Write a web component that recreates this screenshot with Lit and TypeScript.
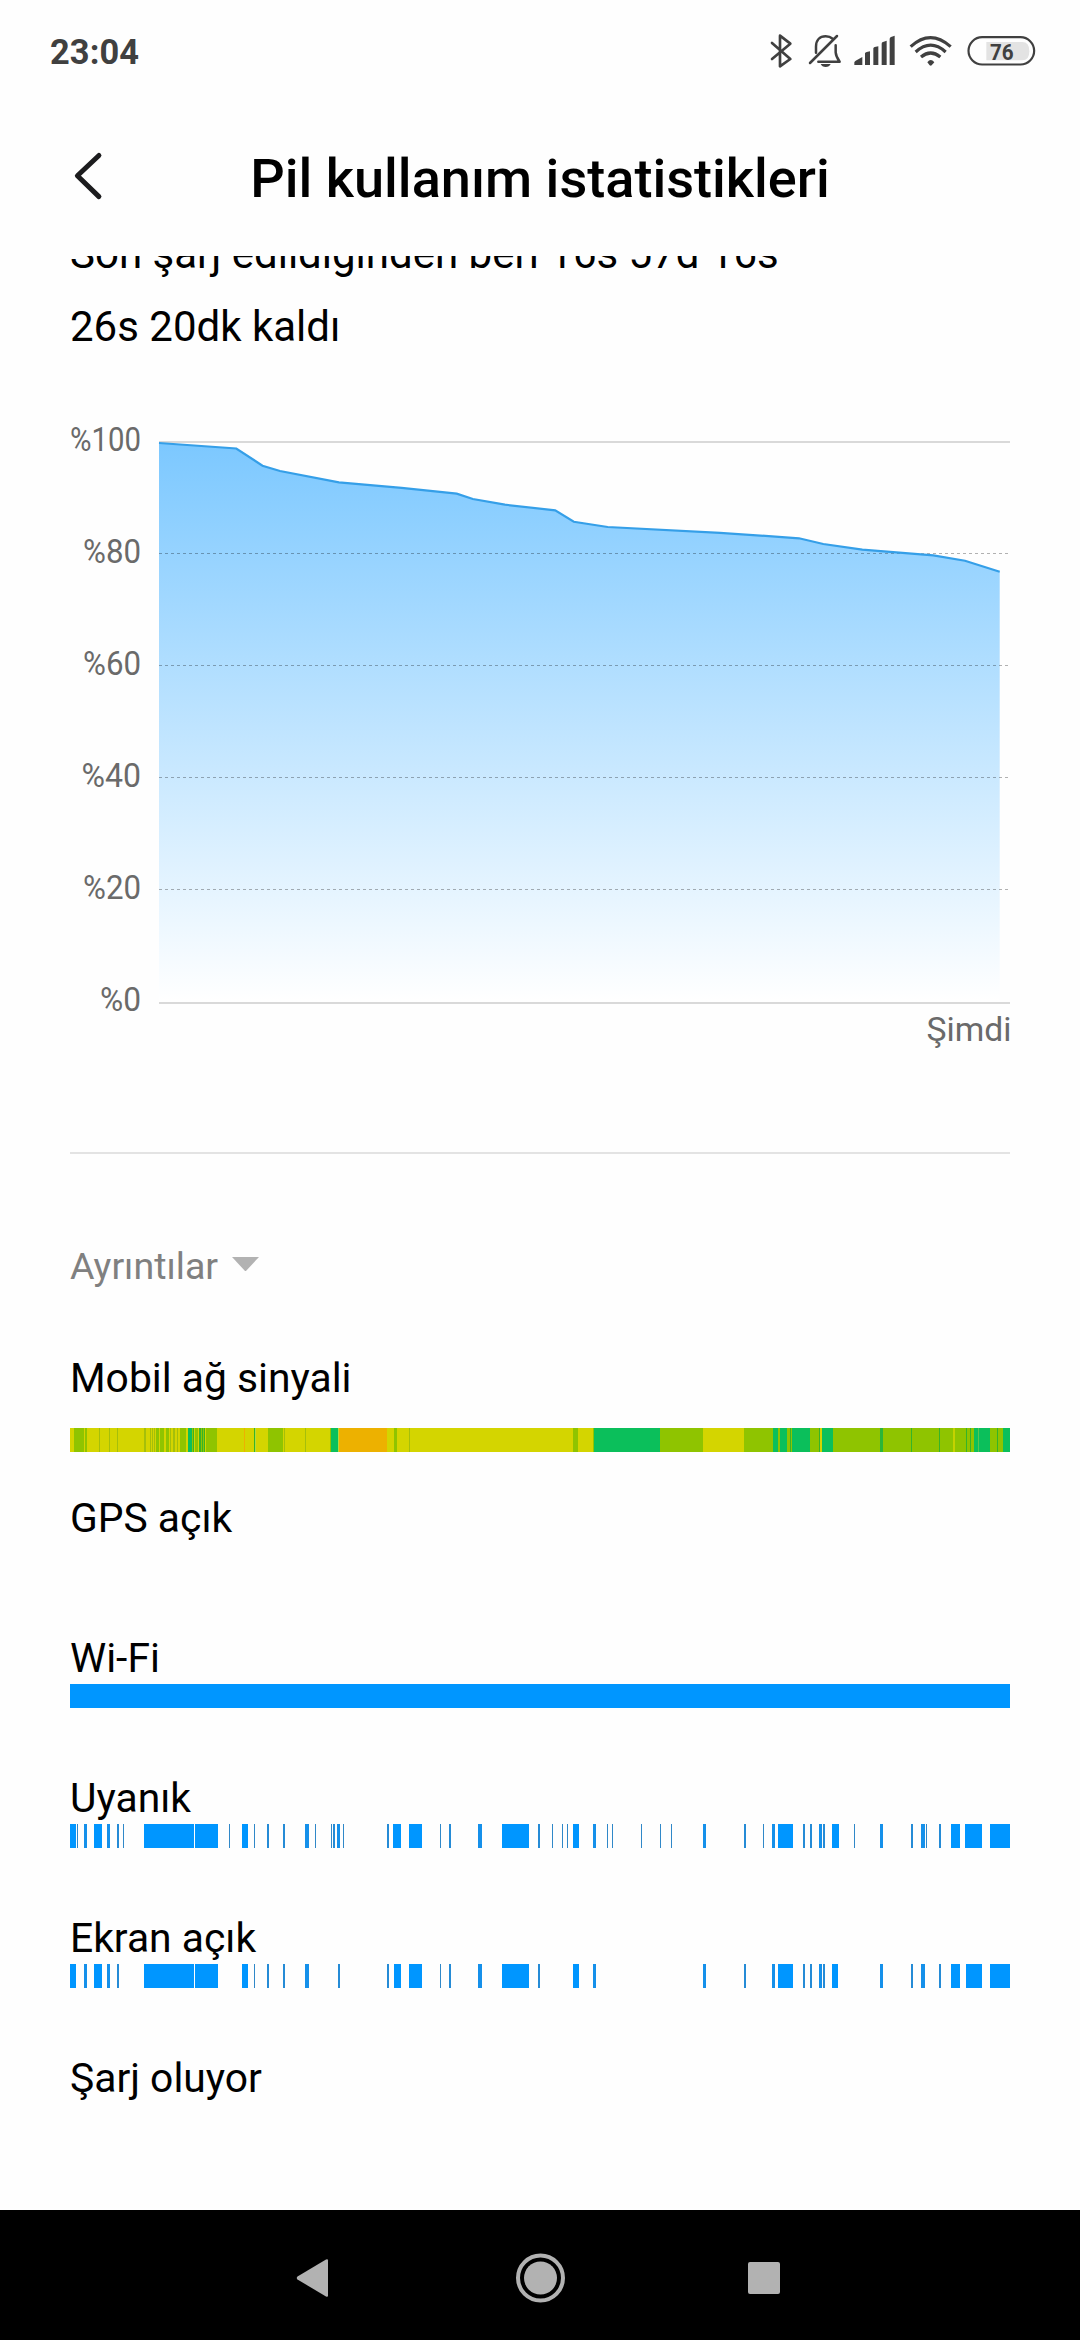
import { LitElement, html, svg, css } from "lit";
import { customElement, property } from "lit/decorators.js";

type Span = [start: number, width: number];
type Band = [start: number, width: number, fill: string];

const TRACK = 940;

// Signal strength palette, weakest to strongest
const O = "#edb100";
const Y = "#d4d500";
const L = "#a5bf0a";
const G = "#8fc400";
const M = "#35b428";
const T = "#0bbf5b";

const SIGNAL: Band[] = [
  [0, 940, Y],
  [4, 10, G], [15, 2, G], [29, 1, L], [39, 1, L], [47, 1, L], [74, 2, L],
  [80, 1, L], [82, 1, L], [84, 1, L], [86, 3, G], [90, 4, G], [96, 3, G], [100, 1, L],
  [103, 2, L], [107, 1, L], [110, 6, G], [118, 4, T], [122, 1, G], [123, 1, M],
  [125, 3, G], [129, 2, M], [131, 1, G], [132, 1, M], [133, 1, G], [134, 1, M], [136, 11, G],
  [174, 1, O], [184, 1, M], [185, 1, "#b4dc3c"], [198, 15, G], [214, 1, L], [235, 1, L],
  [260, 1, G], [261, 7, T], [268, 1, "#b4dc3c"], [269, 48, O],
  [324, 3, G], [339, 1, L], [503, 5, G], [523, 1, G], [524, 66, T], [590, 43, G],
  [674, 266, G],
  [703, 5, T], [710, 7, T], [720, 1, M], [722, 18, T], [749, 1, M], [750, 2, Y], [752, 11, T],
  [810, 3, "#2bb53a"], [841, 1, M], [869, 1, M], [883, 2, "#c4d200"], [896, 1, M], [900, 1, M],
  [904, 4, T], [908, 1, "#55c850"], [909, 11, T], [927, 1, M], [933, 7, T],
];

const WIFI: Span[] = [[0, 940]];

const AWAKE: Span[] = [
  [0, 6], [7, 1], [14, 3], [24, 8], [37, 3], [47, 2], [53, 1], [74, 50], [125, 23], [159, 1],
  [172, 6], [184, 1], [197, 2], [213, 2], [235, 4], [245, 1], [261, 1], [263, 2], [267, 3],
  [273, 1], [317, 2], [323, 8], [339, 13], [370, 1], [379, 2], [408, 4], [432, 27], [468, 2],
  [482, 1], [492, 1], [497, 1], [503, 6], [523, 3], [537, 1], [542, 1], [571, 1], [590, 1],
  [601, 1], [633, 3], [674, 2], [693, 1], [702, 3], [708, 15], [733, 2], [740, 2], [749, 3],
  [753, 2], [762, 7], [784, 1], [810, 3], [841, 2], [851, 4], [856, 1], [869, 2], [881, 9],
  [895, 17], [920, 20],
];

const SCREEN: Span[] = [
  [0, 6], [14, 3], [24, 8], [37, 3], [47, 2], [74, 50], [125, 23], [172, 6], [184, 1],
  [197, 2], [213, 2], [235, 4], [268, 2], [317, 2], [324, 7], [339, 13], [370, 1], [379, 2],
  [408, 4], [432, 27], [468, 2], [503, 6], [523, 3], [633, 3], [674, 2], [702, 3], [708, 15],
  [733, 2], [740, 2], [749, 3], [753, 2], [762, 6], [810, 3], [841, 2], [851, 4], [869, 2],
  [881, 9], [896, 16], [920, 20],
];

// Narrow ticks are a little darker than wide blocks
const tint = (w: number) => (w < 2 ? "#3088c8" : w < 3 ? "#258bd6" : w < 5 ? "#1590ea" : "#0096ff");
const activity = (spans: Span[]): Band[] => spans.map(([s, w]) => [s, w, tint(w)]);

@customElement("status-bar")
class StatusBar extends LitElement {
  static styles = css`
    :host { display: flex; justify-content: space-between; height: 103px; padding: 0 44px 0 50px; color: #404040; }
    .time { font-size: 34.4px; font-weight: 700; line-height: 104px; letter-spacing: 0.1px; }
    .icons { display: flex; align-items: flex-start; padding-top: 32px; }
    svg { display: block; fill: none; stroke: #404040; stroke-linecap: round; stroke-linejoin: round; }
    .solid { fill: #404040; stroke: none; }
    .level { fill: #e3e3e3; stroke: none; }
    .bt { margin-right: 15px; }
    .bell { margin-right: 12px; }
    .signal { margin-right: 14px; }
    .wifi { margin-right: 15px; }
    .pct { fill: #404040; stroke: none; font: 700 68px Roboto, sans-serif; }
  `;
  render() {
    return html`
      <span class="time">23:04</span>
      <div class="icons">
        <svg class="bt" width="23" height="38" viewBox="88 36 69 114">
          <path stroke-width="8" d="M94 69 149 117 118 139V47L149 71 94 117"></path>
        </svg>
        <svg class="bell" width="34" height="38" viewBox="199 36 102 114">
          <path stroke-width="7.500" d="M223 98V80C223 60 234 49 252 49C261 49 267 51 273 56M282 76V97Q283 110 294 125H230M205 129 286 48"></path>
          <path class="solid" d="M237 132H267Q263 141 252 141T237 132Z"></path>
        </svg>
        <svg class="signal" width="41" height="38" viewBox="338 36 123 114">
          <path class="solid" d="M339 135V127Q340 124 343 122L363 111V135ZM371 135V99Q373 97 376 96L386 94V135ZM396 135V85Q397 82 400 81L411 79V135ZM421 135V71Q421 67 425 66L436 62V135ZM445 135V57Q445 53 449 51L460 47V135Z"></path>
        </svg>
        <svg class="wifi" width="43" height="38" viewBox="505 36 129 114">
          <path stroke-width="9.500" stroke-linecap="butt" d="M510 80Q569 26 630 80M525 96Q570 55 615 96M541 111Q570 87 599 111"></path>
          <path class="solid" d="M560 127Q570 113 581 127L573 136Q570 138 567 136Z"></path>
        </svg>
        <svg width="69" height="38" viewBox="680 36 207 114">
          <path class="level" d="M738 66H846Q867 66 867 93.500T846 121H738Z"></path>
          <rect x="684.500" y="51.500" width="197" height="82" rx="41" stroke-width="6.500"></rect>
          <text class="pct" x="749" y="119" textLength="71" lengthAdjust="spacingAndGlyphs">76</text>
        </svg>
      </div>`;
  }
}

@customElement("title-bar")
class TitleBar extends LitElement {
  static styles = css`
    :host { display: grid; grid-template-columns: 120px 1fr 120px; height: 153px; }
    .back { margin: 45px 0 0 70px; display: block; }
    h1 { margin: 0; font-size: 54.100px; font-weight: 500; line-height: 151px; text-align: center; color: #000; white-space: nowrap; }
  `;
  render() {
    return html`
      <svg class="back" width="34" height="56" viewBox="0 0 34 56" fill="none" stroke="#1c1c1e" stroke-width="5" stroke-linecap="round" stroke-linejoin="round">
        <path d="M28.900 7.500 7.400 27.700 28.900 48.600"></path>
      </svg>
      <h1>Pil kullanım istatistikleri</h1>`;
  }
}

@customElement("battery-chart")
class BatteryChart extends LitElement {
  static styles = css`
    :host { display: block; }
    svg { display: block; }
    .axis { font: 400 34px Roboto, sans-serif; fill: #6a6a6a; text-anchor: end; }
    .now { font: 400 33.700px Roboto, sans-serif; fill: #6a6a6a; text-anchor: end; }
  `;
  private levels = [
    { v: 100, w: 71 }, { v: 80, w: 58 }, { v: 60, w: 58 },
    { v: 40, w: 59.5 }, { v: 20, w: 58 }, { v: 0, w: 41 },
  ];
  render() {
    const line = "159,443 236.300,448.500 262.500,465.700 280,471 338.900,482.300 401.600,487.800 456.700,493.700 472.900,499 504.900,504.700 555.200,510.300 573.800,521.800 607.700,527 720,532.800 799,538.300 823.300,544 862.300,549.700 933.300,555.300 965,560.700 999.700,571.700";
    return html`
      <svg width="940" height="660" viewBox="70 400 940 660">
        <defs>
          <linearGradient id="fade" gradientUnits="userSpaceOnUse" x1="0" y1="443" x2="0" y2="1001">
            <stop offset="0" stop-color="#7cc8ff"></stop>
            <stop offset="1" stop-color="#ffffff"></stop>
          </linearGradient>
        </defs>
        <rect x="159" y="441" width="851" height="2" fill="#d9d9d9"></rect>
        <polygon points="${line} 999.700,1002 159,1002" fill="url(#fade)"></polygon>
        ${[553, 665, 777, 889].map((y) => svg`<path d="M159 ${y + 0.5}H1010" stroke="#000" stroke-opacity="0.3" stroke-dasharray="3 3"></path>`)}
        <polyline points=${line} fill="none" stroke="#359fe8" stroke-width="2.200"></polyline>
        <rect x="159" y="1002" width="851" height="2" fill="#d9d9d9"></rect>
        ${this.levels.map(({ v, w }, i) => svg`<text class="axis" x="141" y=${450.700 + i * 112} textLength=${w} lengthAdjust="spacingAndGlyphs">%${v}</text>`)}
        <text class="now" x="1011.500" y="1041">Şimdi</text>
      </svg>`;
  }
}

@customElement("timeline-row")
class TimelineRow extends LitElement {
  static styles = css`
    :host { display: flex; flex-direction: column; height: 140px; }
    .name { font-size: 40.800px; line-height: 48px; color: #000; white-space: nowrap; }
    svg { display: block; }
    .near { margin-top: 2px; }
    .far { margin-top: 26px; }
  `;
  @property() name = "";
  @property({ attribute: false }) bands: Band[] = [];
  @property({ type: Boolean }) spaced = false;
  render() {
    return html`
      <div class="name">${this.name}</div>
      ${this.bands.length
        ? html`<svg class=${this.spaced ? "far" : "near"} width=${TRACK} height="24" shape-rendering="crispEdges">
            ${this.bands.map(([x, w, f]) => svg`<rect x=${x} width=${w} height="24" fill=${f}></rect>`)}
          </svg>`
        : null}`;
  }
}

@customElement("nav-bar")
class NavBar extends LitElement {
  static styles = css`
    :host { display: flex; align-items: center; height: 124px; padding: 6px 0 0 293px; background: #000; }
    svg { display: block; fill: #b2b2b2; }
    .home { margin: 0 179px 0 184px; }
  `;
  render() {
    return html`
      <svg width="38" height="50" viewBox="0 0 38 50"><path d="M4.500 26.500Q3 25 4.500 23.500L33 6.500Q35 5.500 35 7.500V42.500Q35 44.500 33 43.500Z"></path></svg>
      <svg class="home" width="51" height="50" viewBox="0 0 51 50"><circle cx="25.500" cy="25" r="22.500" fill="none" stroke="#b2b2b2" stroke-width="4"></circle><circle cx="25.500" cy="25" r="16.500"></circle></svg>
      <svg width="36" height="50" viewBox="0 0 36 50"><rect x="3" y="9" width="32" height="32" rx="2"></rect></svg>`;
  }
}

@customElement("app-root")
class AppRoot extends LitElement {
  static styles = css`
    :host { display: flex; flex-direction: column; width: 1080px; height: 2340px; overflow: hidden; background: #fefefe; font-family: Roboto, "Noto Sans", sans-serif; }
    .scroll { flex: 1; min-height: 0; overflow: hidden; padding: 0 70px; }
    .summary { margin: -39px 0 0; font-size: 42px; line-height: 73px; color: #000; white-space: nowrap; }
    battery-chart { margin-top: 37px; }
    .rule { height: 2px; margin-top: 92px; background: #e3e3e3; }
    .details { display: flex; align-items: center; gap: 14px; margin-top: 86px; height: 52px; font-size: 37.600px; line-height: 52px; color: #808080; }
    .arrow { width: 27px; height: 14.500px; margin-top: -4px; fill: #b2b2b2; display: block; }
    .rows { margin-top: 62px; }
  `;
  render() {
    return html`
      <status-bar></status-bar>
      <title-bar></title-bar>
      <main class="scroll">
        <div class="summary">
          <div>Son şarj edildiğinden beri 16s 57d 16s</div>
          <div>26s 20dk kaldı</div>
        </div>
        <battery-chart></battery-chart>
        <div class="rule"></div>
        <div class="details">
          <span>Ayrıntılar</span>
          <svg class="arrow" viewBox="0 0 27 14.500"><path d="M0 0H27L13.500 14.500Z"></path></svg>
        </div>
        <div class="rows">
          <timeline-row name="Mobil ağ sinyali" spaced .bands=${SIGNAL}></timeline-row>
          <timeline-row name="GPS açık"></timeline-row>
          <timeline-row name="Wi-Fi" .bands=${activity(WIFI)}></timeline-row>
          <timeline-row name="Uyanık" .bands=${activity(AWAKE)}></timeline-row>
          <timeline-row name="Ekran açık" .bands=${activity(SCREEN)}></timeline-row>
          <timeline-row name="Şarj oluyor"></timeline-row>
        </div>
      </main>
      <nav-bar></nav-bar>`;
  }
}
